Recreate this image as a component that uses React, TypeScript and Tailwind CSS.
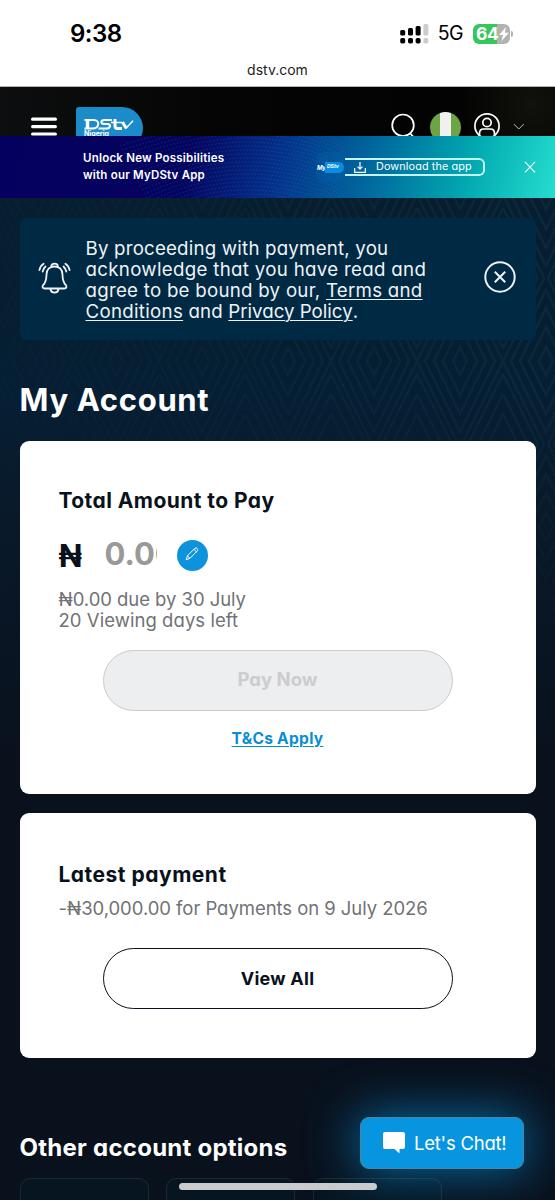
import type { ReactNode } from "react";

function StatusBar() {
  return (
    <div className="flex h-[87px] shrink-0 flex-col border-b border-[#b4b4b4] bg-white text-black">
      <div className="flex h-[67px] items-center justify-between pl-[70px] pr-[42px]">
        <span className="text-[24px] leading-none font-semibold tracking-[-0.5px]">9:38</span>
        <div className="flex items-center">
          <svg width="29" height="20" viewBox="0 0 29 20">
            <rect x="0.2" y="6" width="5" height="5.5" rx="1.5" />
            <rect x="8" y="4" width="5" height="7.5" rx="1.5" />
            <rect x="15.6" y="2" width="5" height="9.5" rx="1.5" />
            <rect x="23.4" y="0" width="5" height="11.5" rx="1.5" fill="#cdcdcd" />
            <rect x="0.2" y="14" width="5" height="5.4" rx="1.7" />
            <rect x="8" y="14" width="5" height="5.4" rx="1.7" />
            <rect x="15.6" y="14" width="5" height="5.4" rx="1.7" />
            <rect x="23.4" y="14" width="5" height="5.4" rx="1.7" fill="#cdcdcd" />
          </svg>
          <span className="ml-[9px] pt-px text-[19.5px] leading-none tracking-[-0.6px]">5G</span>
          <div className="ml-[10px] flex h-5 w-[37px] items-center rounded-md bg-[linear-gradient(90deg,#34c759_64%,#b2b2b2_64%)] pl-[3px] text-white">
            <span className="text-[17.5px] leading-none font-bold tracking-[-0.3px]">64</span>
            <svg width="10" height="14" viewBox="0 0 10 14" fill="currentColor"><path d="M7 0 0 8h4L2.5 14 10 5.8H5.8Z" /></svg>
          </div>
          <div className="ml-px h-[6px] w-[2px] rounded-r-full bg-[#b2b2b2]" />
        </div>
      </div>
      <div className="flex justify-center pt-px text-[14px] leading-[4px] tracking-[0px] text-[#222]">dstv.com</div>
    </div>
  );
}

function Header() {
  return (
    <div className="flex h-[49px] shrink-0 items-start overflow-hidden bg-[radial-gradient(circle_at_96%_35%,#11120c,#030303_14%,#050505_60%,#0d0e0f)] text-white">
      <svg className="mt-[30px] ml-[31px]" width="26" height="20" viewBox="0 0 26 20" stroke="currentColor" strokeWidth="3.2" strokeLinecap="round"><path d="M1.6 2.2h22.8M1.6 9.6h22.8M1.6 17h22.8" /></svg>
      <div className="mt-5 ml-[19px] flex h-[42px] w-[67px] flex-col rounded-l-[3px] rounded-r-[21px] bg-[#1b8bc9] pt-[11px] pl-2">
        <svg width="50" height="12" viewBox="0 0 50 12" fill="none" stroke="#fff">
          <path d="M3.500 1.500v9" strokeWidth="3.400" />
          <path d="M.5 2h9c7.500 0 5.500 8.500-1 8.500h-8" strokeWidth="1.800" />
          <path d="M28 2h-7.500c-4.500 0-3.500 4-.5 4h3.500c4 0 3 4.500-1 4.500h-8" strokeWidth="2.200" />
          <path d="M31 1v7c0 2 .8 2.500 2.500 2.500h4.500" strokeWidth="3" />
          <path d="M27 4.500h11" strokeWidth="1.500" />
          <path d="M38.500 4l3.500 6" strokeWidth="3" />
          <path d="M41.500 10.800l7.500-8" strokeWidth="1.500" />
        </svg>
        <span className="text-[7px] leading-[8px] font-bold tracking-[0px]">Nigeria</span>
      </div>
      <svg className="mt-[26px] ml-[248px]" width="26" height="26" viewBox="0 0 26 26" fill="none" stroke="currentColor" strokeWidth="1.7"><circle cx="12" cy="12.300" r="10.800" /><path d="M18.800 20.200l5 5" /></svg>
      <div className="mt-[25px] ml-[13px] size-[31px] overflow-hidden rounded-full bg-[linear-gradient(90deg,#6da544_33%,#f0f0f0_33%,#f0f0f0_67%,#6da544_67%)]" />
      <svg className="mt-[26px] ml-[13px]" width="26" height="26" viewBox="0 0 26 26" fill="none" stroke="currentColor" strokeWidth="1.7"><circle cx="13" cy="13" r="12.100" /><circle cx="13" cy="9.500" r="4.200" /><path d="M5.500 22.500v-2c0-3 2-4.500 4-4.500h7c2 0 4 1.500 4 4.500v2" /></svg>
      <svg className="mt-[36px] ml-[13px]" width="12" height="8" viewBox="0 0 12 8" fill="none" stroke="#bbb" strokeWidth="1"><path d="M.8 1l5 5 5-5" /></svg>
    </div>
  );
}

function Waves() {
  return (
    <svg className="pointer-events-none absolute inset-y-0 left-[100px]" width="250" height="62" viewBox="0 0 250 62" fill="none" stroke="#218ad0" strokeWidth="0.8" strokeDasharray="1.5 2">
      {Array.from({ length: 20 }, (_, i) => (
        <path key={i} opacity={0.34} d={`M${20 + i * 2} ${i * 4 + 10}Q100 ${i * 4 - 15} 150 ${i * 4 - 14}T245 ${i * 4 + 8}`} />
      ))}
    </svg>
  );
}

function Promo() {
  return (
    <div className="relative flex h-[62px] shrink-0 items-center overflow-hidden bg-[linear-gradient(104deg,#04005f_0%,#05045f_34%,#05318a_50%,#006e9f_68%,#02a9b1_84%,#25ddce_100%)] text-white">
      <Waves />
      <div className="relative ml-[83px] w-[233px] text-[11.500px] leading-[17px] font-semibold whitespace-nowrap">
        <p className="tracking-[0.220px]">Unlock New Possibilities</p>
        <p className="tracking-[0.200px]">with our MyDStv App</p>
      </div>
      <div className="relative flex h-[30px] w-[28px] items-center rounded-lg bg-[#0560a4]/40">
        <span className="w-[9px] pl-px text-[6px] font-bold italic tracking-[-0.500px]">My</span>
        <span className="flex h-[11px] w-[19px] items-center rounded-r-full bg-[#078ee0] pl-[2px] text-[5px] font-bold italic">DStv</span>
      </div>
      <div className="relative ml-px flex h-[18px] w-[140px] items-center rounded-r-md border-2 border-l-0 border-[#c4f5f4] pl-[9px]">
        <svg width="12" height="11" viewBox="0 0 12 11" fill="none" stroke="currentColor" strokeWidth="1.200"><path d="M.7 6v4.300h10.600V6M6 0v7M3.500 4.700L6 7.200l2.500-2.500" /></svg>
        <span className="ml-[10px] pt-px text-[10.800px] leading-none tracking-[0.130px] whitespace-nowrap">Download the app</span>
      </div>
      <svg className="ml-[39px]" width="12" height="12" viewBox="0 0 11 12" stroke="currentColor" strokeWidth="1.100"><path d="M.4.800l10.200 10.500M10.600.800L.4 11.300" /></svg>
    </div>
  );
}

function Notice() {
  return (
    <div className="flex h-[122px] items-center rounded-md bg-[#002943] text-[#eef3f6]">
      <svg className="mt-[-2px] ml-[18px]" width="33" height="32" viewBox="0 0 33 32" fill="none" stroke="currentColor" strokeWidth="1.800" strokeLinecap="round" strokeLinejoin="round">
        <path d="M16.500 4.500c-5 0-8 3.200-8 8 0 6-.8 8-3.300 10.500-1.500 2-.3 3.500 1.500 3.500h19.600c1.800 0 3-1.500 1.500-3.500-2.500-2.500-3.300-4.500-3.300-10.500 0-4.800-3-8-8-8ZM12.500 27.500c1 4.200 7 4.200 8 0M13 5c0-4.500 7-4.500 7 0" />
        <path d="M4.700 9.500c.5-2.300 1.300-3.700 2.800-5M1.400 8C2 5.200 3.500 3 5.600 1.700M28.300 9.500c-.5-2.300-1.300-3.700-2.800-5M31.600 8C31 5.200 29.500 3 27.400 1.700" />
      </svg>
      <p className="mt-1 ml-[15px] w-[370px] text-[18.700px] leading-[20.800px] whitespace-nowrap">
        <span className="block tracking-[0.200px]">By proceeding with payment, you</span>
        <span className="block tracking-[0.310px]">acknowledge that you have read and</span>
        <span className="block tracking-[0.260px]">agree to be bound by our, <a className="underline decoration-1 underline-offset-2">Terms and</a></span>
        <span className="block tracking-[0.150px]"><a className="tracking-[0.300px] underline decoration-1 underline-offset-2">Conditions</a> and <a className="tracking-[0px] underline decoration-1 underline-offset-2">Privacy Policy</a>.</span>
      </p>
      <svg className="mt-[-4px] ml-[28px]" width="32" height="32" viewBox="0 0 32 32" fill="none" stroke="currentColor" strokeWidth="2"><circle cx="16" cy="16" r="14.700" /><path d="M10.800 10.800l10.400 10.400M21.200 10.800L10.800 21.200" /></svg>
    </div>
  );
}

function Pill({ className, children }: { className: string; children: ReactNode }) {
  return <button className={`flex w-[350px] shrink-0 items-center justify-center self-center rounded-full border font-bold ${className}`}>{children}</button>;
}

function Diamonds() {
  return (
    <svg className="pointer-events-none absolute inset-x-0 top-0" width="555" height="500">
      <defs>
        <pattern id="weave" width="86" height="166" patternUnits="userSpaceOnUse" x="417" y="80">
          <path d="M43 -4L0 83l43 87L86 83ZM43 12L8 83l35 71 35-71ZM43 30L17 83l26 53 26-53ZM43 49L26 83l17 34 17-34ZM43 69l-7 14 7 14 7-14ZM-35 0L0 70 35 0M-25 0L0 50 25 0M-15 0L0 30 15 0M51 0l35 70M61 0l25 50M71 0l15 30M0 96l-35 70M0 96l35 70M0 116l25 50M0 136l15 30M86 96l-35 70M86 116l-25 50M86 136l-15 30" fill="none" stroke="#17404a" strokeWidth="2.500" />
        </pattern>
        <linearGradient id="fadeX"><stop offset="0" stopColor="#fff" stopOpacity=".06" /><stop offset="1" stopColor="#fff" stopOpacity=".32" /></linearGradient>
        <linearGradient id="fadeY" x2="0" y2="1"><stop offset="0.35" stopColor="#000" stopOpacity="0" /><stop offset="0.9" stopColor="#000" /></linearGradient>
        <mask id="fade"><rect width="555" height="500" fill="url(#fadeX)" /><rect width="555" height="500" fill="url(#fadeY)" /></mask>
      </defs>
      <rect width="555" height="500" fill="url(#weave)" mask="url(#fade)" />
    </svg>
  );
}

export default function App() {
  return (
    <div className="relative flex h-[1200px] w-[555px] flex-col overflow-hidden bg-[#09111d] font-['Inter',sans-serif] [font-feature-settings:'cv11']">
      <StatusBar />
      <Header />
      <Promo />
      <main className="relative flex grow flex-col bg-[linear-gradient(180deg,#071e30_0px,#061e33_200px,#091a2b_300px,#09111d_560px)] px-[19.500px] pt-5">
        <Diamonds />
        <div className="relative flex flex-col">
          <Notice />
          <h1 className="mt-[40px] h-10 text-[31px] leading-10 font-bold tracking-[0.680px] whitespace-nowrap text-white">My Account</h1>
          <section className="mt-[21px] flex h-[353px] flex-col rounded-[9px] bg-white px-[39px] pt-[45px] text-[#09111d]">
            <h2 className="h-[29px] text-[21px] leading-[29px] font-bold tracking-[0.430px] whitespace-nowrap">Total Amount to Pay</h2>
            <div className="mt-[24px] flex h-8 items-center">
              <span className="w-[46px] pt-px text-[31px] leading-8 font-bold">₦</span>
              <span className="mt-[-2px] w-[52px] overflow-hidden text-[31px] leading-8 font-bold whitespace-nowrap text-[#999]">0.00</span>
              <span className="mt-px ml-5 flex size-[31px] items-center justify-center rounded-full bg-[#0d93dc]">
                <svg className="mt-[-3px]" width="14" height="14" viewBox="0 0 14 14" fill="none" stroke="#fff" strokeWidth="1"><path d="M1.200 12.800l1.200-4L10 1.200c1.500-1 3.500 1 2.500 2.500l-7.500 7.600ZM2.400 8.800l2.600 2.500M8.900 2.300l2.600 2.600" /></svg>
              </span>
            </div>
            <div className="mt-[18px] text-[18.500px] leading-[20.800px] whitespace-nowrap text-[#707276]">
              <p className="tracking-[-0.050px]">₦0.00 due by 30 July</p>
              <p className="tracking-[0.060px]">20 Viewing days left</p>
            </div>
            <Pill className="mt-[19px] h-[61px] border-[#cbcbcc] bg-[#edeef0] text-[18.500px] text-[#cbccce]">Pay Now</Pill>
            <a className="mt-[18px] self-center text-[15.500px] leading-5 font-bold tracking-[0.300px] text-[#078fd3] underline decoration-1 underline-offset-2">T&amp;Cs Apply</a>
          </section>
          <section className="mt-[19px] flex h-[245px] flex-col rounded-[9px] bg-white px-[39px] pt-[47px] text-[#09111d]">
            <h2 className="h-[30px] text-[21px] leading-[30px] font-bold tracking-[0.500px] whitespace-nowrap">Latest payment</h2>
            <p className="mt-[6px] h-6 text-[18.500px] leading-6 tracking-[-0.050px] whitespace-nowrap text-[#707276]">-₦30,000.00 for Payments on 9 July 2026</p>
            <Pill className="mt-[28px] h-[61px] border-[#09111d] text-[18px] tracking-[0.250px]">View All</Pill>
          </section>
          <h2 className="mt-[72px] h-9 text-[24px] leading-9 font-bold tracking-[0.250px] whitespace-nowrap text-white">Other account options</h2>
          <div className="mt-3 flex gap-[17.500px]">
            <div className="h-20 w-[129px] shrink-0 rounded-[10px] border border-[#1a2a34] bg-[#071521]" />
            <div className="h-20 w-[129px] shrink-0 rounded-[10px] border border-[#1a2a34] bg-[#071521]" />
            <div className="h-20 w-[129px] shrink-0 rounded-[10px] border border-[#1a2a34] bg-[#071521]" />
          </div>
        </div>
      </main>
      <button className="absolute top-[1117px] left-[360px] flex h-[52px] w-[164px] items-center rounded-[9px] border border-[#4c85a5] bg-[#0895df] pl-[22px] text-white shadow-[0_0_48px_3px_rgba(8,149,223,0.650)]">
        <svg width="22" height="22" viewBox="0 0 22 22" fill="currentColor"><path d="M2 0h18q2 0 2 2v13q0 2-2 2h-3.500v4.500L11.500 17H2q-2 0-2-2V2Q0 0 2 0Z" /></svg>
        <span className="ml-[9px] text-[18.500px] leading-none tracking-[-0.230px] whitespace-nowrap">Let's Chat!</span>
      </button>
      <div className="absolute top-[1183px] left-[179px] h-[7px] w-[198px] rounded-full bg-[#c9cacc]" />
    </div>
  );
}
